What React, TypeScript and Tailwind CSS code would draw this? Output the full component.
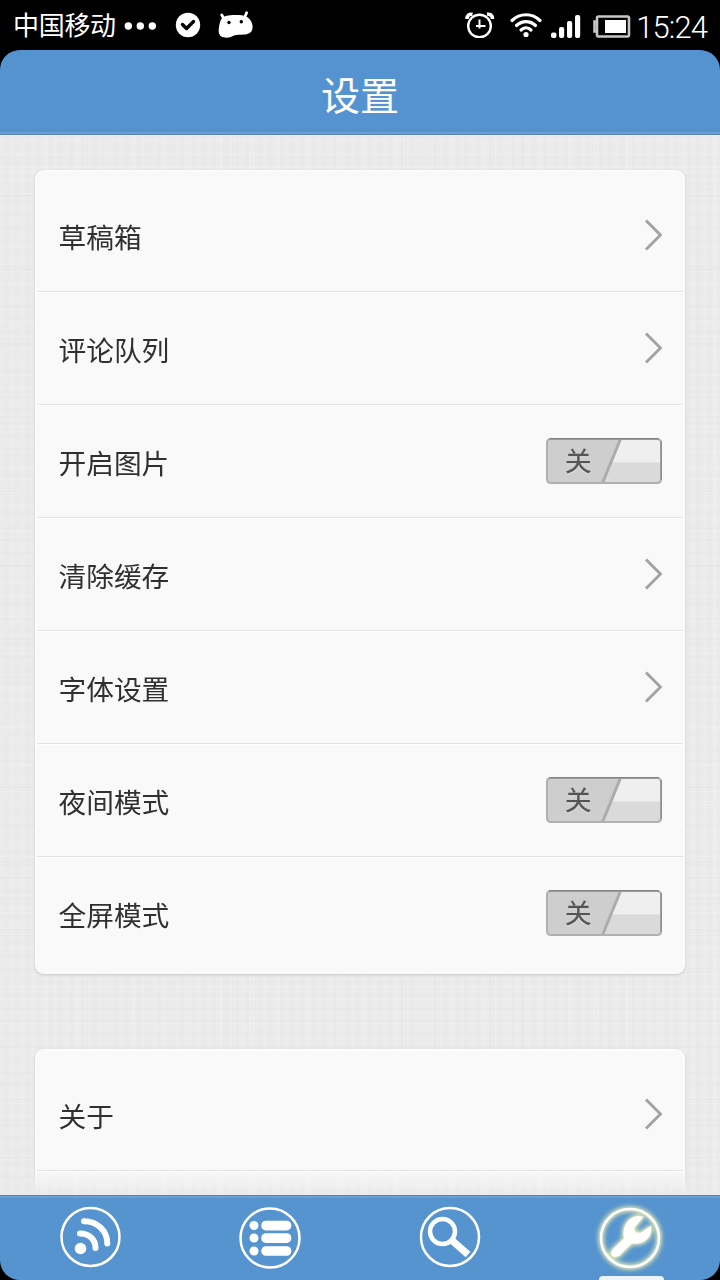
import { useState } from "react";
import clsx from "clsx";

type Row = { id: string; label: string; kind: "link" | "toggle" };

const mainRows: Row[] = [
  { id: "drafts", label: "草稿箱", kind: "link" },
  { id: "comments", label: "评论队列", kind: "link" },
  { id: "images", label: "开启图片", kind: "toggle" },
  { id: "cache", label: "清除缓存", kind: "link" },
  { id: "font", label: "字体设置", kind: "link" },
  { id: "night", label: "夜间模式", kind: "toggle" },
  { id: "fullscreen", label: "全屏模式", kind: "toggle" },
];

const aboutRows: Row[] = [
  { id: "about", label: "关于", kind: "link" },
  { id: "version", label: "", kind: "link" },
];

const StatusBar = () => (
  <div className="h-[50px] shrink-0 flex items-center justify-between pl-[13px] pr-[13px] text-white">
    <div className="flex items-center">
      <span className="-mt-[2px] text-[26px] leading-[50px] tracking-[-0.3px]">中国移动</span>
      <svg width="34" height="8" viewBox="0 0 34 8" className="ml-[8px] mt-px" fill="currentColor">
        <circle cx="4.300" cy="4" r="3.7" />
        <circle cx="16.300" cy="4" r="3.7" />
        <circle cx="28.300" cy="4" r="3.7" />
      </svg>
      <svg width="26" height="26" viewBox="0 0 26 26" className="ml-[17px]">
        <circle cx="13" cy="13" r="12.2" fill="#fff" />
        <path d="M7.5 12.5 L11.5 16.5 L18.5 9.5" fill="none" stroke="#000" strokeWidth="3.4" strokeLinecap="round" strokeLinejoin="round" />
      </svg>
      <svg width="36" height="28" viewBox="0 0 36 28" className="ml-[17px]">
        <path d="M5.5 7 L3.8 4 M27.300 5 L28.600 1.800" stroke="#fff" strokeWidth="2.800" strokeLinecap="round" />
        <path
          d="M4 7 C8 4 13 4 18 4 C24 3.600 29 4.800 31.500 8 C34 11 35 14 34.500 17.500 C34 21 31 23.300 26 23.600 C22 24 19 23.500 16 24.500 C12 26.500 9 27.300 5.500 26.300 C1.500 25.500 .3 22 .8 18 C1.200 13.500 2 10 4 7Z"
          fill="#fff"
        />
        <circle cx="11" cy="11.500" r="1.700" fill="#000" />
        <circle cx="23.300" cy="10.800" r="1.700" fill="#000" />
      </svg>
    </div>
    <div className="flex items-center">
      <svg width="30" height="26" viewBox="0 0 30 26" fill="none" stroke="currentColor">
        <circle cx="14.500" cy="14" r="11.300" strokeWidth="2.400" />
        <path d="M14.500 7.500 V16.500 M11 14 H20.500" strokeWidth="2" />
        <path d="M2 7 C2 3 4.500 1.800 7.500 2.300 M27.500 7 C27.500 3 25 1.800 22 2.300" strokeWidth="3.600" />
      </svg>
      <svg width="32" height="26" viewBox="0 0 32 26" fill="none" stroke="currentColor" strokeWidth="3.200" strokeLinecap="round" className="ml-[15px]">
        <path d="M2 8.500 C10 .8 22 .8 30 8.500" />
        <path d="M6.500 13.500 C12 8.200 20 8.200 25.500 13.500" />
        <path d="M11 18 C14 15.200 18 15.200 21 18" />
        <circle cx="16" cy="22.500" r="2.600" fill="currentColor" stroke="none" />
      </svg>
      <svg width="30" height="24" viewBox="0 0 30 24" fill="currentColor" className="ml-[9px] mt-[2px]">
        <rect x="0" y="18.500" width="5.500" height="5.500" rx="2" />
        <rect x="8" y="13" width="5.200" height="11" rx="2" />
        <rect x="16" y="7" width="5.200" height="17" rx="2" />
        <rect x="24" y="1" width="5.200" height="23" rx="2" />
      </svg>
      <svg width="38" height="23" viewBox="0 0 38 23" className="ml-[12px] mt-[2px]">
        <rect x="4" y="1.500" width="32" height="20" rx="1.500" fill="none" stroke="#c9c5c5" strokeWidth="2.600" />
        <path d="M4 6.500 H1.500 V16.500 H4" fill="none" stroke="#c9c5c5" strokeWidth="2.600" />
        <rect x="12" y="5" width="21" height="13" fill="#fff" />
      </svg>
      <span className="ml-[5px] mt-[5px] font-[Roboto,sans-serif] font-light text-[31px] leading-[45px] tracking-[-0.9px]">15:24</span>
    </div>
  </div>
);

const Chevron = () => (
  <svg width="18" height="32" viewBox="0 0 18 32" fill="none" stroke="#a3a3a3" strokeWidth="3" className="mr-px">
    <path d="M2 1.500 L16.500 16 L2 30.500" />
  </svg>
);

const Toggle = ({ on, onChange }: { on: boolean; onChange: () => void }) => (
  <button
    role="switch"
    aria-checked={on}
    onClick={onChange}
    className="relative mr-px -mt-px w-[116px] h-[46px] rounded-[4px] overflow-hidden">
    <svg width="116" height="46" viewBox="0 0 116 46" className={clsx("block", on && "-scale-x-100")}>
      <rect width="116" height="46" rx="4" fill="#cecece" />
      <path d="M75 0 H116 V25 H65Z" fill="#efefef" />
      <path d="M65 24.500 H116 V46 H57Z" fill="#dadada" />
      <path d="M74.500 1 L56.500 45" stroke="#acacac" strokeWidth="3" />
      <rect x="1" y="1" width="114" height="44" rx="4" fill="none" stroke="#b0b0b0" strokeWidth="2" />
      <path d="M3 .7 H113" stroke="#858585" strokeWidth="1.400" />
      <path d="M115.300 3 V42" stroke="#8c8c8c" strokeWidth="1.400" />
    </svg>
    <span
      className={clsx(
        "absolute top-0 text-[26.500px] leading-[44px] text-[#555] [-webkit-text-stroke:0.3px_#555] [text-shadow:0_1px_1px_#fff]",
        on ? "right-[19px]" : "left-[19px]"
      )}>
      {on ? "开" : "关"}
    </span>
  </button>
);

const SettingsCard = ({ rows }: { rows: Row[] }) => {
  const [enabled, setEnabled] = useState<string[]>([]);

  const toggle = (id: string) => {
    setEnabled((prev) =>
      prev.includes(id) ? prev.filter((x) => x !== id) : [...prev, id]
    );
  };

  return (
    <div className="shrink-0 rounded-[9px] bg-[#f9f9f9] border-x-2 border-t-2 border-[#fcfcfc] pt-[7px] pb-[4px] shadow-[0_1px_3px_rgba(0,0,0,0.16)]">
      {rows.map((row, i) => (
        <div
          key={row.id}
          className={clsx(
            "h-[113px] flex items-center justify-between pl-[21.5px] pr-[20px]",
            i < rows.length - 1 && "border-b border-[#e1e2e4] shadow-[0_1px_0_#fff]"
          )}>
          <span className="mt-px text-[27.7px] leading-[40px] text-[#303030]">{row.label}</span>
          {row.kind === "link" ? (
            <Chevron />
          ) : (
            <Toggle on={enabled.includes(row.id)} onChange={() => toggle(row.id)} />
          )}
        </div>
      ))}
    </div>
  );
};

const Ring = () => <circle cx="32" cy="32" r="29" fill="none" strokeWidth="2.500" />;

const FeedIcon = () => (
  <svg width="64" height="64" viewBox="0 0 64 64" fill="none" stroke="#fff" className="-mt-[2px]">
    <circle cx="32.500" cy="32" r="29" fill="none" strokeWidth="2.500" />
    <circle cx="22.500" cy="43.500" r="5.800" fill="#fff" stroke="none" />
    <path d="M22 28.500 C31 28.500 37.500 34.500 37.500 43" strokeWidth="6" strokeLinecap="round" />
    <path d="M26 16.300 C39 16.300 49.300 25.500 49.300 38.500" strokeWidth="6" strokeLinecap="round" />
  </svg>
);

const ListIcon = () => (
  <svg width="64" height="64" viewBox="0 0 64 64" fill="#fff" stroke="#fff" className="-mt-px">
    <circle cx="32" cy="32" r="29.500" fill="none" strokeWidth="2.500" />
    <g stroke="none">
      <circle cx="16" cy="19.500" r="4.500" />
      <circle cx="16" cy="32" r="4.500" />
      <circle cx="16" cy="45" r="4.500" />
      <rect x="23.300" y="14.800" width="30" height="9.600" rx="4.500" />
      <rect x="23.300" y="27.300" width="30" height="9.600" rx="4.500" />
      <rect x="23.300" y="40.200" width="30" height="9.600" rx="4.500" />
    </g>
  </svg>
);

const SearchIcon = () => (
  <svg width="64" height="64" viewBox="0 0 64 64" fill="none" stroke="#fff" className="-mt-[2px]">
    <Ring />
    <circle cx="24.500" cy="26.500" r="12.500" strokeWidth="4.500" />
    <path d="M33.500 35 L50 49.500" strokeWidth="7" />
  </svg>
);

const WrenchIcon = () => (
  <svg
    width="64"
    height="64"
    viewBox="0 0 64 64"
    stroke="#fff"
    className="overflow-visible [filter:drop-shadow(0_0_2px_#f0f0b0)_drop-shadow(0_0_2px_#e4eab0)]">
    <Ring />
    <path
      d="M14.500 43.500 L26 32.500 C24 23.500 27.500 14.500 35.500 11 C39.500 9.600 42.500 9.900 45.500 11 L36.500 21.500 Q35.500 26 39.500 26.800 L43.500 26.500 L53 19.500 C54 25 52.500 31 47.500 34.500 C43.500 37.500 38.500 38 34 37.300 L21.500 49.500 C16 53.500 10.500 48.500 14.500 43.500Z"
      fill="#fff"
      stroke="none"
    />
  </svg>
);

const tabs = [
  { id: "feed", Icon: FeedIcon },
  { id: "list", Icon: ListIcon },
  { id: "search", Icon: SearchIcon },
  { id: "settings", Icon: WrenchIcon },
];

const App = () => {
  const [activeTab, setActiveTab] = useState("settings");

  return (
    <div className="w-[720px] h-[1280px] bg-black flex flex-col overflow-hidden font-['Noto_Sans_CJK_SC',sans-serif]">
      <StatusBar />
      <div className="flex-1 min-h-0 flex flex-col rounded-[20px] overflow-hidden">
        <header className="h-[85px] shrink-0 flex items-center justify-center bg-[#5593d0] border-b border-[#5583b2] shadow-[inset_0_-2px_0_#6b9fd3] pt-[2px]">
          <h1 className="text-[39px] leading-[58px] text-white">设置</h1>
        </header>

        {/* woven background */}
        <main className="flex-1 min-h-0 bg-[#ebebeb] bg-[repeating-linear-gradient(90deg,rgba(255,255,255,0.14)_0_1px,transparent_1px_5px,rgba(0,0,0,0.008)_5px_7px,transparent_7px_11px),repeating-linear-gradient(0deg,rgba(255,255,255,0.14)_0_1px,transparent_1px_4px,rgba(0,0,0,0.008)_4px_6px,transparent_6px_13px),repeating-linear-gradient(90deg,rgba(0,0,0,0.012)_0_1px,transparent_1px_17px,rgba(255,255,255,0.12)_17px_19px,transparent_19px_29px),repeating-linear-gradient(0deg,rgba(0,0,0,0.014)_0_1px,transparent_1px_23px,rgba(255,255,255,0.14)_23px_24px,transparent_24px_37px)]">
          <div className="h-full overflow-hidden flex flex-col gap-[75px] px-[35px] pt-[35px] [mask-image:linear-gradient(to_bottom,#000_calc(100%-27px),transparent)]">
            <SettingsCard rows={mainRows} />
            <SettingsCard rows={aboutRows} />
          </div>
        </main>

        <nav className="h-[85px] shrink-0 grid grid-cols-4 bg-[#5694d0] border-t border-[#4b89c4] shadow-[inset_0_2px_0_#6b9fd3]">
          {tabs.map(({ id, Icon }) => (
            <button
              key={id}
              onClick={() => setActiveTab(id)}
              className="relative flex items-center justify-center">
              <Icon />
              {activeTab === id && (
                <span className="absolute bottom-0 left-[59px] w-[65px] h-[4px] rounded-t-[4px] bg-[#edf3fa]" />
              )}
            </button>
          ))}
        </nav>
      </div>
    </div>
  );
};

export default App;
